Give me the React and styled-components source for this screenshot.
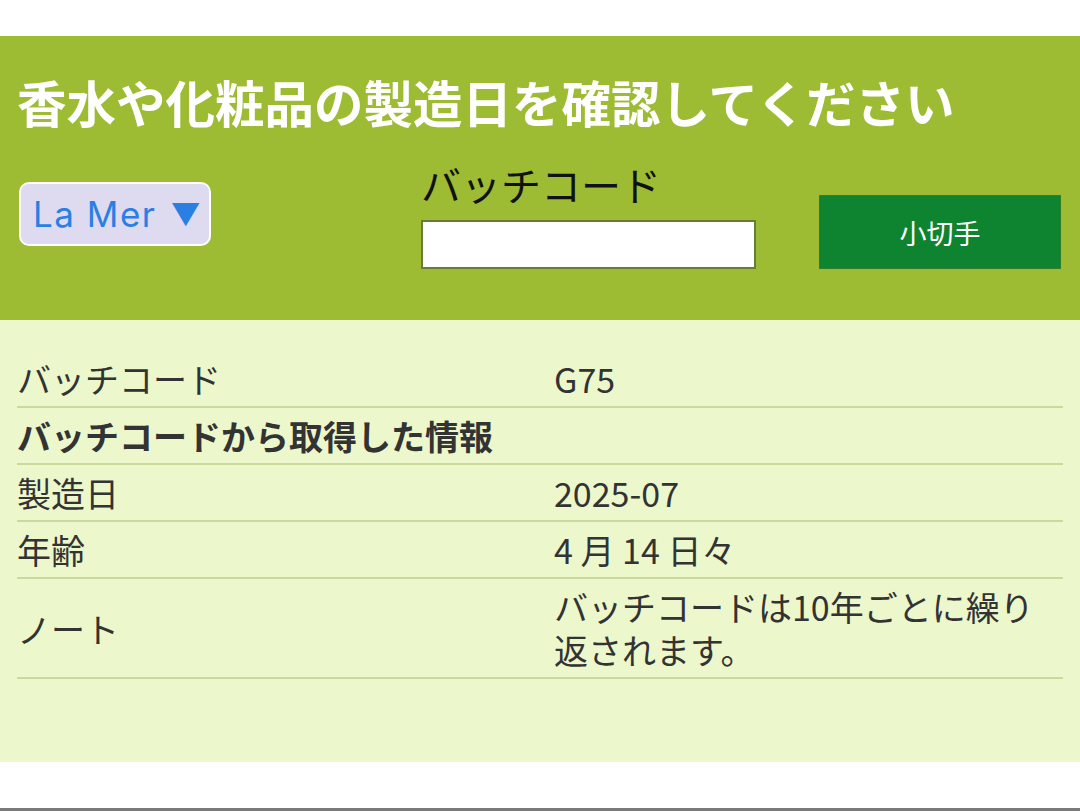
import styled, { createGlobalStyle } from 'styled-components';

const GlobalStyle = createGlobalStyle`
  html, body {
    margin: 0;
    padding: 0;
    background: #ffffff;
    font-family: "Noto Sans CJK JP", "Noto Sans", sans-serif;
  }
`;

const Page = styled.div`
  width: 1080px;
  height: 811px;
  display: flex;
  flex-direction: column;
  padding-top: 36px;
  box-sizing: border-box;
`;

const Header = styled.header`
  background: #9dbb33;
  height: 284px;
  box-sizing: border-box;
  padding: 35px 17px 0 17px;
`;

const Title = styled.h1`
  margin: 0;
  color: #ffffff;
  font-size: 49.5px;
  line-height: 62px;
  font-weight: 700;
  white-space: nowrap;
`;

const Controls = styled.div`
  display: grid;
  grid-template-columns: 404px 398px 1fr;
  align-items: center;
  margin-top: 26px;
`;

const Select = styled.div`
  justify-self: start;
  margin-left: 2px;
  width: 192px;
  height: 64px;
  box-sizing: border-box;
  background: #dedaf0;
  border: 2px solid #ffffff;
  border-radius: 10px;
  color: #2b7fe3;
  font-family: "Inter", "Noto Sans", sans-serif;
  font-size: 35px;
  letter-spacing: 1.5px;
  display: flex;
  align-items: center;
  padding-left: 12px;
  gap: 14px;
`;

const Arrow = styled.span`
  font-size: 30px;
  line-height: 1;
`;

const Field = styled.div`
  display: flex;
  flex-direction: column;
`;

const Label = styled.label`
  color: #111;
  font-size: 40px;
  line-height: 50px;
  margin-bottom: 11px;
`;

const Input = styled.input`
  width: 335px;
  height: 49px;
  box-sizing: border-box;
  border: 2px solid #6a7b38;
  background: #ffffff;
  margin: 0;
  padding: 0 8px;
  font-size: 24px;
`;

const Button = styled.button`
  align-self: end;
  width: 242px;
  height: 74px;
  border: 1px solid #2f7f2a;
  background: #0e8431;
  color: #ffffff;
  font-family: "Noto Sans CJK JP", sans-serif;
  font-size: 27px;
  cursor: pointer;
`;

const Content = styled.main`
  background: #ecf7cb;
  height: 442px;
  box-sizing: border-box;
  padding: 31px 17px 0 17px;
`;

const Row = styled.div`
  display: grid;
  grid-template-columns: 537px 1fr;
  align-items: center;
  padding: 6px 0;
  border-bottom: 2px solid #c9da9c;
  color: #333333;
  font-size: 34px;
  line-height: 43px;
  font-weight: ${(p) => (p.$heading ? 700 : 400)};
`;

const Cell = styled.div`
  padding-right: 20px;
  white-space: ${(p) => (p.$nowrap ? 'nowrap' : 'normal')};
`;

const Bottom = styled.div`
  flex: 1;
  border-bottom: 3px solid #7a7a7a;
`;

const rows = [
  ['製造日', '2025-07'],
  ['年齢', '4 月 14 日々'],
  ['ノート', 'バッチコードは10年ごとに繰り返されます。'],
];

export default function App() {
  return (
    <>
      <GlobalStyle />
      <Page>
        <Header>
          <Title>香水や化粧品の製造日を確認してください</Title>
          <Controls>
            <Select>
              La Mer <Arrow>▼</Arrow>
            </Select>
            <Field>
              <Label>バッチコード</Label>
              <Input type="text" />
            </Field>
            <Button>小切手</Button>
          </Controls>
        </Header>
        <Content>
          <Row>
            <Cell>バッチコード</Cell>
            <Cell>G75</Cell>
          </Row>
          <Row $heading>
            <Cell $nowrap>バッチコードから取得した情報</Cell>
            <Cell />
          </Row>
          {rows.map(([k, v]) => (
            <Row key={k}>
              <Cell>{k}</Cell>
              <Cell>{v}</Cell>
            </Row>
          ))}
        </Content>
        <Bottom />
      </Page>
    </>
  );
}
